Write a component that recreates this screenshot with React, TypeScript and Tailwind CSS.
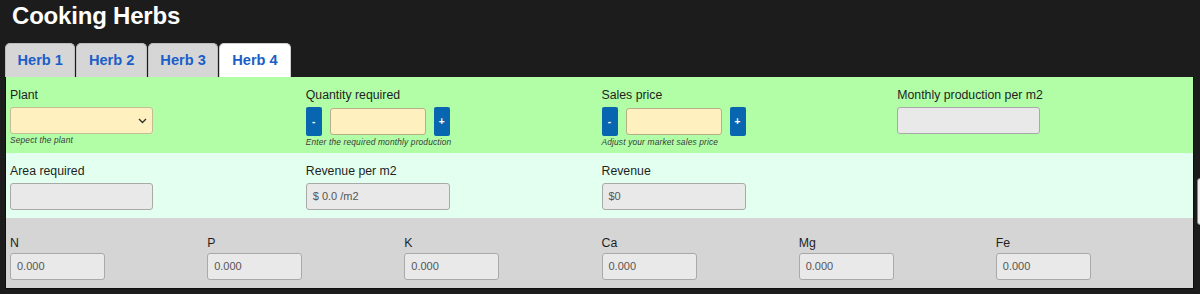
import React from "react";

const font = { fontFamily: '"Liberation Sans", Arial, Helvetica, sans-serif' };

function Label({ children }: { children: React.ReactNode }) {
  return <div className="text-[12.3px] leading-[16px] text-[#1f1f1f]">{children}</div>;
}

function Helper({ children }: { children: React.ReactNode }) {
  return <div className="mt-[1px] text-[8.4px] leading-[10px] italic text-[#3a3a3a] tracking-[0.15px]">{children}</div>;
}

function GreyBox({ value, w = "w-[143px]", mt = "mt-[4px]" }: { value?: string; w?: string; mt?: string }) {
  return (
    <div
      className={`${w} ${mt} h-[27px] rounded-[3px] border border-[#a9a9a9] bg-[#e9e9e9] flex items-center px-[6px] text-[11px] text-[#555]`}
    >
      {value}
    </div>
  );
}

function Stepper({ help }: { help: string }) {
  return (
    <div>
      <div className="mt-[4px] flex items-center gap-[8px]">
        <div className="w-[16px] h-[29px] rounded-[2px] bg-[#0866b0] flex items-center justify-center text-white text-[10px] font-bold">
          -
        </div>
        <div className="w-[96px] h-[27px] rounded-[3px] border border-[#b5b08a] bg-[#fff0c0]" />
        <div className="w-[16px] h-[29px] rounded-[2px] bg-[#0866b0] flex items-center justify-center text-white text-[10px] font-bold">
          +
        </div>
      </div>
      <Helper>{help}</Helper>
    </div>
  );
}

export default function App() {
  const tabs = ["Herb 1", "Herb 2", "Herb 3", "Herb 4"];
  const nutrients = ["N", "P", "K", "Ca", "Mg", "Fe"];
  return (
    <div className="relative w-[1200px] h-[294px] bg-[#1c1c1c] overflow-hidden" style={font}>
      <div className="pt-[2px] pl-[12px] text-[24px] leading-[28px] font-bold text-white tracking-[-0.2px]">Cooking Herbs</div>
      <div className="mt-[13px] ml-[5px] flex items-end gap-[1px]">
        {tabs.map((t, i) => (
          <div
            key={t}
            className={`h-[34px] flex items-center rounded-t-[5px] border border-b-0 text-[14.6px] font-bold text-[#1a5ec8] ${
              i === 3 ? "bg-white border-[#cfcfcf] px-[12px]" : "bg-[#d6d6d6] border-[#bdbdbd] px-[11.5px]"
            }`}
          >
            {t}
          </div>
        ))}
      </div>
      <div className="ml-[5px] w-[1189px] border-x border-b border-[#0e0e0e]">
        <div className="bg-[#b1fea7] h-[76px] pl-[4px] pt-[10px] grid grid-cols-4">
          <div>
            <Label>Plant</Label>
            <div className="mt-[4px] w-[143px] h-[27px] rounded-[3px] border border-[#c3bd93] bg-[#fff0c0] flex items-center justify-end pr-[5px]">
              <svg width="9" height="6" viewBox="0 0 9 6" fill="none">
                <path d="M1 1l3.5 3.5L8 1" stroke="#333" strokeWidth="1.4" />
              </svg>
            </div>
            <Helper>Sepect the plant</Helper>
          </div>
          <div>
            <Label>Quantity required</Label>
            <Stepper help="Enter the required monthly production" />
          </div>
          <div>
            <Label>Sales price</Label>
            <Stepper help="Adjust your market sales price" />
          </div>
          <div>
            <Label>Monthly production per m2</Label>
            <GreyBox />
          </div>
        </div>
        <div className="bg-[#e3fff0] h-[65px] pl-[4px] pt-[10px] grid grid-cols-4">
          <div>
            <Label>Area required</Label>
            <GreyBox />
          </div>
          <div>
            <Label>Revenue per m2</Label>
            <GreyBox value="$ 0.0 /m2" w="w-[144px]" />
          </div>
          <div>
            <Label>Revenue</Label>
            <GreyBox value="$0" w="w-[144px]" />
          </div>
          <div />
        </div>
        <div className="bg-[#d5d5d5] h-[70px] pl-[4px] pt-[17px] grid grid-cols-6">
          {nutrients.map((n) => (
            <div key={n}>
              <Label>{n}</Label>
              <GreyBox value="0.000" w="w-[95px]" mt="mt-[2px]" />
            </div>
          ))}
        </div>
      </div>
      <div className="absolute left-[1197px] top-[178px] w-[12px] h-[47px] rounded-[3px] border border-[#888] bg-[#eeeeee]" />
    </div>
  );
}
